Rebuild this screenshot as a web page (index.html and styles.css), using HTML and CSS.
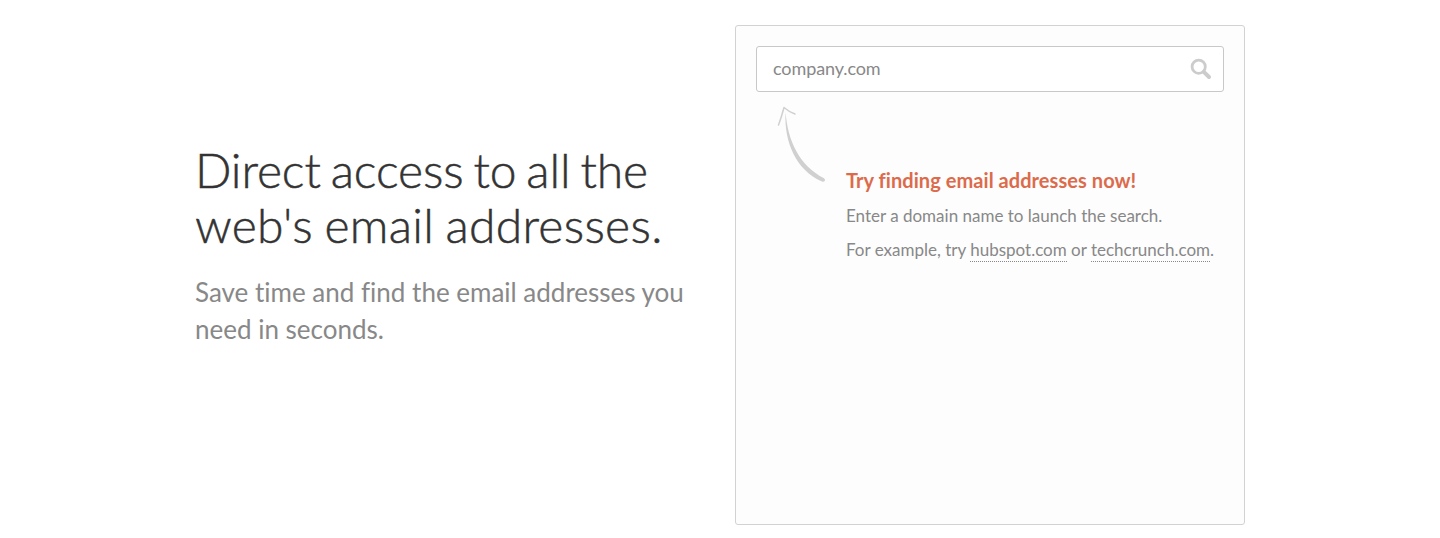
FILE: index.html
```html
<!DOCTYPE html>
<html>
  <head>
    <meta charset="UTF-8" />
    <title>Direct access to all the web's email addresses</title>
    <link rel="stylesheet" href="styles.css">
  </head>
  <body>
    <div class="hero">
      <div class="intro">
        <h1><span class="line-one">Direct access to all the</span><br>web's email addresses.</h1>
        <p>Save time and find the email addresses you<br>need in seconds.</p>
      </div>

      <div class="search-box">
        <form class="search-field">
          <input type="text" placeholder="company.com" />
          <svg class="search-icon" width="22" height="22" viewBox="0 0 22 22">
            <circle cx="8.7" cy="8.7" r="6.6" />
            <path class="handle" d="M13.800 13.800L19 19" />
          </svg>
        </form>

        <div class="hint">
          <svg class="arrow" width="50" height="78" viewBox="0 0 50 78">
            <path class="head" d="M2.500 19Q5.500 11 8 1.500Q12.500 5.500 19 8" />
            <path class="tail" d="M9.500 6.200C12 35 23 59 48 72.200Q50 73.700 48.500 75.200Q47.500 76 46 75.500C20 64 8 36 9.500 6.200Z" />
          </svg>
          <div class="hint-text">
            <h2>Try finding email addresses now!</h2>
            <p class="enter">Enter a domain name to launch the search.</p>
            <p class="example">For example, try <a>hubspot.com</a> or <a>techcrunch.com</a>.</p>
          </div>
        </div>
      </div>
    </div>
  </body>
</html>
```

FILE: styles.css
```css
body {
  margin: 0;
  background-color: #fff;
  font-family: Lato, "Open Sans", sans-serif;
  font-variant-ligatures: none;
  color: #888;
}

.hero {
  display: flex;
  width: 1050px;
  margin: 0 auto;
  padding-top: 25px;
}

/* Left column */
.intro {
  width: 540px;
  padding-top: 117px;
  white-space: nowrap;
}

.intro h1 {
  margin: 0;
  font-size: 48px;
  font-weight: 300;
  line-height: 55px;
  letter-spacing: 0.3px;
  word-spacing: -2px;
  color: #333;
  -webkit-text-stroke: 0.5px #333;
}

.intro .line-one {
  letter-spacing: -0.1px;
  word-spacing: -3px;
}

.intro p {
  margin: 22px 0 0;
  font-size: 26px;
  line-height: 37px;
}

/* Right column */
.search-box {
  box-sizing: border-box;
  width: 510px;
  height: 500px;
  padding: 20px;
  border: 1px solid #d2d2d2;
  border-radius: 3px;
  background-color: #fdfdfd;
}

.search-field {
  display: flex;
  align-items: center;
  box-sizing: border-box;
  height: 46px;
  padding: 0 11px 0 16px;
  border: 1px solid #c8c8c8;
  border-radius: 3px;
  background-color: #fff;
}

.search-field input {
  flex: 1;
  padding: 0 0 2px;
  border: none;
  outline: none;
  font-family: inherit;
  font-size: 18px;
  letter-spacing: -0.1px;
}

.search-field input::placeholder {
  color: #888;
}

.search-icon {
  fill: none;
  stroke: #ccc;
  stroke-width: 2.8;
  stroke-linecap: round;
}

.search-icon .handle {
  stroke-width: 4;
}

/* Arrow and text below the field */
.hint {
  display: flex;
  padding: 14px 0 0 20px;
}

.arrow .head {
  fill: none;
  stroke: #d0d0d0;
  stroke-width: 1.5;
  stroke-linecap: round;
  stroke-linejoin: round;
}

.arrow .tail {
  fill: #d0d0d0;
}

.hint-text {
  padding: 61px 0 0 20px;
  white-space: nowrap;
}

.hint-text h2 {
  margin: 0;
  font-size: 20px;
  font-weight: bold;
  line-height: 26px;
  letter-spacing: 0.06px;
  color: #dc6b4c;
}

.hint-text p {
  margin: 0;
  font-size: 17px;
  line-height: 34px;
}

.hint-text .enter {
  margin-top: 6px;
}

.hint-text a {
  padding-bottom: 1px;
  border-bottom: 1px dotted #888;
}
```
